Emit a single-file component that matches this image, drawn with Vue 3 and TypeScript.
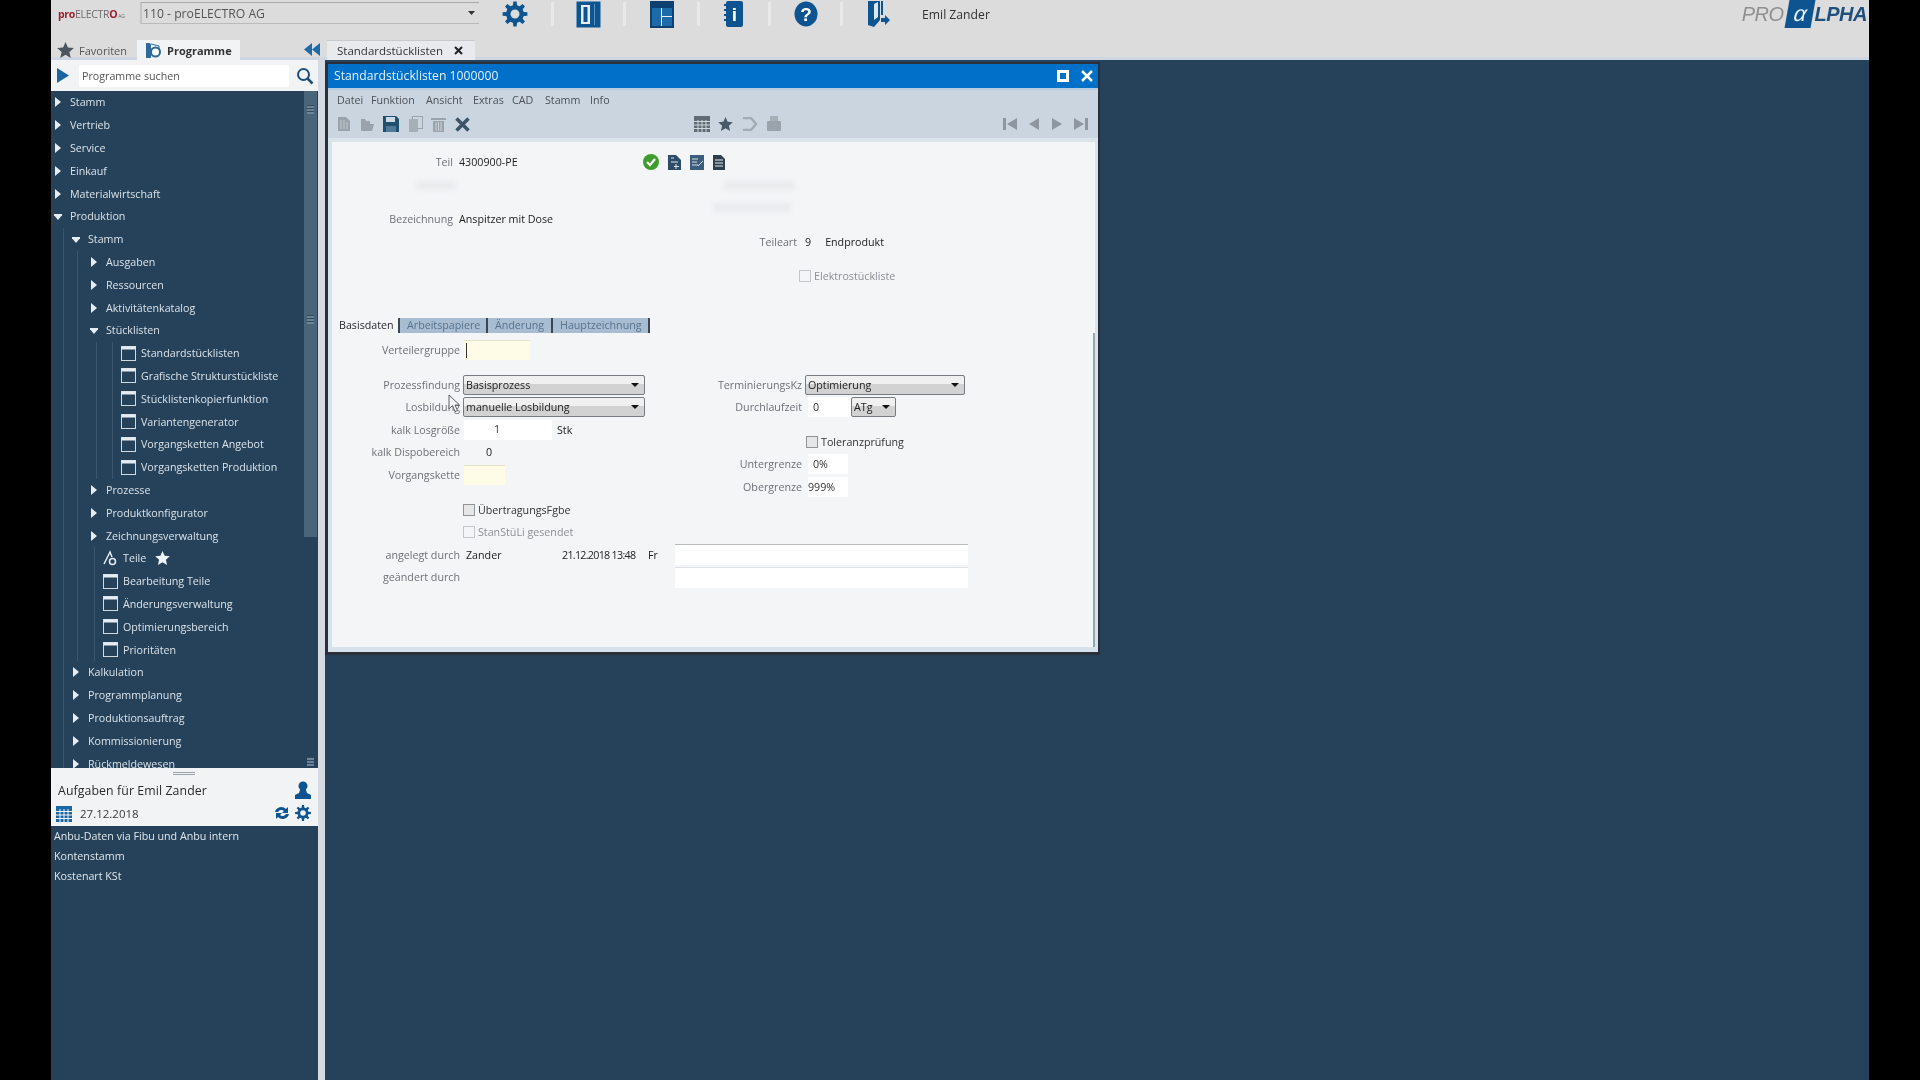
<template>
  <div class="screen">
    <div class="app">
      <!-- top bar -->
      <header class="topbar">
        <div class="top-row">
          <div class="brand"><b>pro</b><span>ELECTR</span><b>O</b><i>AG</i></div>
          <div class="company">
            <span>110 - proELECTRO AG</span>
            <svg width="7" height="4" viewBox="0 0 7 4"><path d="M0 0h7L3.500 4z" fill="#333" /></svg>
          </div>
          <div class="tool-slot" style="width: 75px">
            <svg width="26" height="26" viewBox="0 0 26 26"><path :d="gearPath(13, 13, 12.500, 9, 4.500)" fill="#0e5490" fill-rule="evenodd" /></svg>
          </div>
          <div class="tool-slot" style="width: 72px">
            <svg width="25" height="27" viewBox="0 0 25 27">
              <rect x="0.500" y="0.500" width="24" height="26" fill="#0e5490" />
              <rect x="5" y="4" width="9" height="19" fill="#e8eef4" />
              <rect x="7.500" y="6" width="4" height="15" fill="#0e5490" />
              <path d="M18.500 3v21" stroke="#5d93bf" />
            </svg>
          </div>
          <div class="tool-slot" style="width: 74px">
            <svg width="24" height="27" viewBox="0 0 24 27">
              <rect x="0" y="0" width="24" height="27" fill="#0d3f70" />
              <rect x="2" y="7" width="9" height="18" fill="#1c6ba8" />
              <rect x="12" y="7" width="10" height="8" fill="#1c6ba8" />
              <rect x="12" y="16" width="10" height="9" fill="#1c6ba8" />
              <path d="M11.500 7v18M12 15.500h10" stroke="#e8eef4" />
            </svg>
          </div>
          <div class="tool-slot" style="width: 71px">
            <svg width="20" height="28" viewBox="0 0 20 28">
              <rect x="2" y="1" width="17" height="26" rx="2" fill="#0e5490" />
              <path d="M0 5h4M0 10h4M0 15h4M0 20h4" stroke="#0e5490" stroke-width="2" />
              <text x="10.500" y="21" text-anchor="middle" class="icon-text" font-size="19">i</text>
            </svg>
          </div>
          <div class="tool-slot" style="width: 72px">
            <svg width="24" height="26" viewBox="0 0 24 26">
              <ellipse cx="12" cy="13" rx="11.500" ry="12.500" fill="#0e5490" />
              <text x="12" y="20" text-anchor="middle" class="icon-text" font-size="19">?</text>
            </svg>
          </div>
          <div class="tool-slot last" style="width: 70px">
            <svg width="24" height="28" viewBox="0 0 24 28">
              <path d="M2 1h12v19l-6 7-6-2z" fill="#0e5490" />
              <path d="M8 4l4-2v15l-4 3z" fill="#dce6ee" />
              <path d="M15 1h2v14h-2z" fill="#0e5490" />
              <path d="M15 18h4v-3l5 5-5 5v-3h-4z" fill="#0e5490" />
            </svg>
          </div>
          <span class="user-name">Emil Zander</span>
          <div class="proalpha">
            <span class="pa-pro">PRO</span>
            <span class="pa-box"><em>α</em></span>
            <span class="pa-lpha">LPHA</span>
          </div>
        </div>
        <div class="tab-row">
          <div class="side-tab">
            <svg width="17" height="16" viewBox="0 0 24 23"><path :d="starPath" fill="#4a5560" /></svg>
            <span>Favoriten</span>
          </div>
          <div class="side-tab active">
            <svg width="16" height="17" viewBox="0 0 16 17">
              <path d="M1 1h4l1 2v13H1z" fill="#2d6a9c" />
              <circle cx="10.500" cy="10" r="4.500" fill="#fff" stroke="#2d6a9c" stroke-width="2" />
              <path d="M6 2l8 2v3" fill="none" stroke="#2d6a9c" />
            </svg>
            <span>Programme</span>
          </div>
          <svg class="collapse" width="16" height="13" viewBox="0 0 16 13">
            <path d="M8 0v13L0 6.500zM16 0v13L8 6.500z" fill="#1f6aa8" />
          </svg>
          <div class="doc-tab">
            <span>Standardstücklisten</span>
            <svg width="9" height="9" viewBox="0 0 9 9"><path d="M1 1l7 7M8 1L1 8" stroke="#222" stroke-width="2" /></svg>
          </div>
        </div>
      </header>

      <div class="body">
        <!-- navigation -->
        <aside class="sidebar">
          <div class="search-row">
            <svg width="12" height="15" viewBox="0 0 12 15"><path d="M0 0l12 7.500L0 15z" fill="#1a66a3" /></svg>
            <div class="search-box">Programme suchen</div>
            <svg width="18" height="18" viewBox="0 0 18 18">
              <circle cx="7.500" cy="7.500" r="5.500" fill="none" stroke="#1d4f78" stroke-width="2" />
              <path d="M11.500 11.500l5 5" stroke="#1d4f78" stroke-width="2.500" />
            </svg>
          </div>

          <div class="tree">
            <div v-for="row in treeRows" :key="row.id" class="tree-row" :style="{ paddingLeft: row.indent + 'px' }">
              <i v-for="g in row.guides" :key="g" class="guide" :style="{ left: g + 'px' }"></i>
              <svg v-if="row.kind === 'closed'" class="twist" width="8" height="10" viewBox="0 0 8 10"><path d="M1 0l6 5-6 5z" fill="#e6edf2" /></svg>
              <svg v-else-if="row.kind === 'open'" class="twist" width="8" height="10" viewBox="0 0 8 10"><path d="M-1 3h10L4 9z" fill="#e6edf2" /></svg>
              <svg v-else-if="row.kind === 'tool'" class="leaf" width="15" height="16" viewBox="0 0 15 16">
                <path d="M1 14L7 2l2 5" fill="none" stroke="#e6edf2" stroke-width="1.500" />
                <circle cx="9.500" cy="11.500" r="3" fill="none" stroke="#e6edf2" stroke-width="1.500" />
              </svg>
              <svg v-else class="leaf" width="15" height="15" viewBox="0 0 15 15">
                <rect x="0.500" y="0.500" width="14" height="14" fill="none" stroke="#cfdae3" />
                <rect x="0.500" y="0.500" width="14" height="3" fill="#e6edf2" />
              </svg>
              <span>{{ row.label }}</span>
              <svg v-if="row.kind === 'tool'" class="fav" width="15" height="14" viewBox="0 0 24 23"><path :d="starPath" fill="#eef3f7" /></svg>
            </div>
            <div class="tree-scroll">
              <span class="grip"></span>
              <span class="grip mid"></span>
            </div>
            <span class="grip end"></span>
          </div>

          <section class="tasks">
            <span class="task-grip"></span>
            <div class="task-head">
              <span>Aufgaben für Emil Zander</span>
              <svg width="16" height="18" viewBox="0 0 16 18">
                <circle cx="8" cy="5" r="4.500" fill="#0e5490" />
                <path d="M5 9h6l1 3 4 2v4H0v-4l4-2z" fill="#0e5490" />
              </svg>
            </div>
            <div class="task-date">
              <svg width="16" height="18" viewBox="0 0 16 18">
                <rect y="2" width="16" height="16" fill="#1a66a3" />
                <path d="M0 7.500h16M0 11h16M0 14.500h16M4 5v13M8 5v13M12 5v13" stroke="#f2f3f5" />
              </svg>
              <span>27.12.2018</span>
              <svg class="refresh" width="16" height="16" viewBox="0 0 16 16">
                <path d="M1 7a6.500 6.500 0 0 1 11-3l2-2v6H8l2-2a4 4 0 0 0-6 1z" fill="#0e5490" />
                <path d="M15 9a6.500 6.500 0 0 1-11 3l-2 2V8h6l-2 2a4 4 0 0 0 6-1z" fill="#0e5490" />
              </svg>
              <svg width="16" height="16" viewBox="0 0 26 26"><path :d="gearPath(13, 13, 13, 9, 4.500)" fill="#0e5490" fill-rule="evenodd" /></svg>
            </div>
          </section>

          <ul class="task-list">
            <li>Anbu-Daten via Fibu und Anbu intern</li>
            <li>Kontenstamm</li>
            <li>Kostenart KSt</li>
          </ul>
        </aside>
        <div class="splitter"></div>

        <!-- desktop -->
        <main class="desktop">
          <div class="window">
            <div class="win-title">
              <span>Standardstücklisten 1000000</span>
              <svg width="12" height="12" viewBox="0 0 12 12"><rect x="1.500" y="1.500" width="9" height="9" fill="none" stroke="#fff" stroke-width="3" /></svg>
              <svg class="win-close" width="12" height="12" viewBox="0 0 12 12"><path d="M1 1l10 10M11 1L1 11" stroke="#fff" stroke-width="2.500" /></svg>
            </div>
            <div class="win-band">
              <nav class="win-menu">
                <span style="width: 34px">Datei</span>
                <span style="width: 55px">Funktion</span>
                <span style="width: 47px">Ansicht</span>
                <span style="width: 39px">Extras</span>
                <span style="width: 33px">CAD</span>
                <span style="width: 45px">Stamm</span>
                <span>Info</span>
              </nav>
              <div class="win-tools">
                <div class="tool-group">
                  <svg width="14" height="16" viewBox="0 0 14 16"><path d="M1 1h8l4 4v10H1z" fill="#9aa3ab" /><path d="M4 4v9M7 4v9M10 6v7" stroke="#c3cbd2" /></svg>
                  <svg width="15" height="16" viewBox="0 0 15 16"><path d="M1 3h4l1 2h4v3h4l-2 7H1z" fill="#9aa3ab" /></svg>
                  <svg width="16" height="16" viewBox="0 0 16 16"><path d="M0 0h13l3 3v13H0z" fill="#234f6e" /><rect x="3" y="1" width="9" height="5" fill="#cfdbe4" /><rect x="3" y="10" width="10" height="6" fill="#4d7a99" /></svg>
                  <svg width="15" height="16" viewBox="0 0 15 16"><rect x="4.500" y="0.500" width="10" height="12" fill="none" stroke="#9aa3ab" /><rect x="1" y="3" width="9" height="13" fill="#a7afb6" /></svg>
                  <svg width="15" height="16" viewBox="0 0 15 16"><path d="M0 2h15v2H0zM2 5h11v11H2z" fill="#9aa3ab" /><path d="M5 6v9M7.500 6v9M10 6v9" stroke="#cfd6dc" /></svg>
                  <svg width="15" height="15" viewBox="0 0 15 15"><path d="M1.500 1.500l12 12M13.500 1.500l-12 12" stroke="#3a5568" stroke-width="3.500" /></svg>
                </div>
                <div class="tool-group mid">
                  <svg width="16" height="16" viewBox="0 0 16 16"><rect width="16" height="16" fill="#5f6b75" /><path d="M0 5.500h16M0 9h16M0 12.500h16M4 4v12M8 4v12M12 4v12" stroke="#cfd6dc" /></svg>
                  <svg width="15" height="14" viewBox="0 0 24 23"><path :d="starPath" fill="#4a5a68" /></svg>
                  <svg width="16" height="14" viewBox="0 0 16 14"><path d="M1 1h8l5 6-5 6H1" fill="none" stroke="#a3abb2" stroke-width="2.500" /></svg>
                  <svg width="16" height="16" viewBox="0 0 16 16"><rect x="1" y="5" width="14" height="10" rx="1" fill="#9aa3ab" /><rect x="4" y="0" width="8" height="5" fill="#a7afb6" /></svg>
                </div>
                <div class="tool-group nav">
                  <svg width="14" height="14" viewBox="0 0 14 14"><path d="M0 1h3v12H0zM14 1v12L4 7z" fill="#8e979f" /></svg>
                  <svg width="12" height="14" viewBox="0 0 12 14"><path d="M11 1v12L1 7z" fill="#8e979f" /></svg>
                  <svg width="12" height="14" viewBox="0 0 12 14"><path d="M1 1v12l10-6z" fill="#8e979f" /></svg>
                  <svg width="14" height="14" viewBox="0 0 14 14"><path d="M14 1h-3v12h3zM0 1v12l10-6z" fill="#8e979f" /></svg>
                </div>
              </div>
            </div>

            <div class="win-content">
              <div class="form-head">
                <div class="row">
                  <label class="lbl head-lbl">Teil</label>
                  <span class="val">4300900-PE</span>
                  <div class="teil-icons">
                    <svg width="16" height="16" viewBox="0 0 16 16">
                      <circle cx="8" cy="8" r="8" fill="#3f9d2f" />
                      <path d="M4 8l3 3 5-6" fill="none" stroke="#fff" stroke-width="2.200" />
                    </svg>
                    <svg width="13" height="15" viewBox="0 0 13 15"><path d="M0 0h8l5 5v10H0z" fill="#2c4c68" /><path d="M3 3h3M3 7h7M8 9v5M6 11.500h5" stroke="#dfe6ec" /></svg>
                    <svg width="14" height="15" viewBox="0 0 14 15"><rect width="14" height="15" fill="#3c5d7c" /><path d="M2 4h6M2 7h5M2 10h6M8 11l5-5" stroke="#d6dfe6" /></svg>
                    <svg width="12" height="15" viewBox="0 0 12 15"><path d="M0 0h8l4 4v11H0z" fill="#2f3f4d" /><path d="M2 5h8M2 8h8M2 11h8" stroke="#e8ecef" /></svg>
                  </div>
                </div>
                <div class="head-cols">
                  <div class="head-left">
                    <div class="ghost" style="width: 40px; margin-left: 84px"></div>
                    <div class="row">
                      <label class="lbl head-lbl">Bezeichnung</label>
                      <span class="val">Anspitzer mit Dose</span>
                    </div>
                  </div>
                  <div class="head-right">
                    <div class="ghost" style="width: 71px; margin-left: 92px"></div>
                    <div class="ghost" style="width: 78px; margin-left: 81px"></div>
                    <div class="row teileart">
                      <label class="lbl">Teileart</label>
                      <span class="val">9</span>
                      <span class="val end">Endprodukt</span>
                    </div>
                    <div class="check-row off elektro"><i class="box"></i><span>Elektrostückliste</span></div>
                  </div>
                </div>
              </div>

              <div class="form-tabs">
                <span class="ftab first">Basisdaten</span>
                <span class="ftab" style="width: 88px">Arbeitspapiere</span>
                <span class="ftab" style="width: 65px">Änderung</span>
                <span class="ftab" style="width: 97px">Hauptzeichnung</span>
              </div>

              <div class="row main-lbl verteiler">
                <label class="lbl">Verteilergruppe</label>
                <div class="field yellow" style="width: 66px"><i class="caret"></i></div>
              </div>

              <div class="form-cols">
                <div class="col-left">
                  <div class="row">
                    <label class="lbl">Prozessfindung</label>
                    <div class="combo" style="width: 182px"><span>Basisprozess</span><i class="drop"></i></div>
                  </div>
                  <div class="row">
                    <label class="lbl">Losbildung</label>
                    <div class="combo" style="width: 182px"><span>manuelle Losbildung</span><i class="drop"></i></div>
                  </div>
                  <div class="row">
                    <label class="lbl">kalk Losgröße</label>
                    <div class="field white center-one" style="width: 88px">1</div>
                    <span class="val unit">Stk</span>
                  </div>
                  <div class="row">
                    <label class="lbl">kalk Dispobereich</label>
                    <span class="val dispo">0</span>
                  </div>
                  <div class="row">
                    <label class="lbl">Vorgangskette</label>
                    <div class="field yellow" style="width: 41px"></div>
                  </div>
                  <div class="check-row first-check"><i class="box"></i><span>ÜbertragungsFgbe</span></div>
                  <div class="check-row off"><i class="box"></i><span>StanStüLi gesendet</span></div>
                </div>

                <div class="col-right">
                  <div class="row">
                    <label class="lbl">TerminierungsKz</label>
                    <div class="combo" style="width: 160px"><span>Optimierung</span><i class="drop"></i></div>
                  </div>
                  <div class="row">
                    <label class="lbl">Durchlaufzeit</label>
                    <div class="field white num" style="width: 43px">0</div>
                    <div class="combo" style="width: 45px"><span>ATg</span><i class="drop"></i></div>
                  </div>
                  <div class="check-row toleranz"><i class="box"></i><span>Toleranzprüfung</span></div>
                  <div class="row">
                    <label class="lbl">Untergrenze</label>
                    <div class="field white num" style="width: 40px">0%</div>
                  </div>
                  <div class="row">
                    <label class="lbl">Obergrenze</label>
                    <div class="field white num tight" style="width: 40px">999%</div>
                  </div>
                </div>
              </div>

              <div class="row audit">
                <label class="lbl">angelegt durch</label>
                <span class="val who">Zander</span>
                <span class="val stamp">21.12.2018 13:48</span>
                <span class="val day">Fr</span>
                <div class="field white wide"></div>
              </div>
              <div class="row audit">
                <label class="lbl">geändert durch</label>
                <div class="field white wide empty"></div>
              </div>

              <div class="win-scroll"></div>
            </div>
            <svg class="pointer" width="12" height="19" viewBox="0 0 12 19">
              <path d="M1 1v14l3.500-3.500L7 17.500l2.500-1L7 11h4.500z" fill="#f4f5f7" stroke="#5c6066" />
            </svg>
          </div>
        </main>
      </div>
    </div>
  </div>
</template>

<script setup lang="ts">
type RowKind = 'closed' | 'open' | 'leaf' | 'tool';

interface TreeRow {
  id: number;
  label: string;
  kind: RowKind;
  indent: number;
  guides: number[];
}

// [label, kind, indent]
const rawRows: [string, RowKind, number][] = [
  ['Stamm', 'closed', 3],
  ['Vertrieb', 'closed', 3],
  ['Service', 'closed', 3],
  ['Einkauf', 'closed', 3],
  ['Materialwirtschaft', 'closed', 3],
  ['Produktion', 'open', 3],
  ['Stamm', 'open', 21],
  ['Ausgaben', 'closed', 39],
  ['Ressourcen', 'closed', 39],
  ['Aktivitätenkatalog', 'closed', 39],
  ['Stücklisten', 'open', 39],
  ['Standardstücklisten', 'leaf', 70],
  ['Grafische Strukturstückliste', 'leaf', 70],
  ['Stücklistenkopierfunktion', 'leaf', 70],
  ['Variantengenerator', 'leaf', 70],
  ['Vorgangsketten Angebot', 'leaf', 70],
  ['Vorgangsketten Produktion', 'leaf', 70],
  ['Prozesse', 'closed', 39],
  ['Produktkonfigurator', 'closed', 39],
  ['Zeichnungsverwaltung', 'closed', 39],
  ['Teile', 'tool', 52],
  ['Bearbeitung Teile', 'leaf', 52],
  ['Änderungsverwaltung', 'leaf', 52],
  ['Optimierungsbereich', 'leaf', 52],
  ['Prioritäten', 'leaf', 52],
  ['Kalkulation', 'closed', 21],
  ['Programmplanung', 'closed', 21],
  ['Produktionsauftrag', 'closed', 21],
  ['Kommissionierung', 'closed', 21],
  ['Rückmeldewesen', 'closed', 21],
];

const guidesFor = (i: number): number[] => {
  const out: number[] = [];
  if (i >= 6) out.push(12);
  if (i >= 7 && i <= 24) out.push(26);
  if (i >= 11 && i <= 16) out.push(45, 61);
  if (i >= 20 && i <= 24) out.push(43);
  return out;
};

const treeRows: TreeRow[] = rawRows.map(([label, kind, indent], id) => ({
  id,
  label,
  kind,
  indent,
  guides: guidesFor(id),
}));

const starPath = 'M12 0l3.500 8 8.500.8-6.400 5.700 1.900 8.500L12 18.500 4.500 23l1.900-8.500L0 8.800 8.500 8z';

// gear with 8 teeth and a round hole
const gearPath = (cx: number, cy: number, outer: number, inner: number, hole: number): string => {
  const teeth = 8;
  const pts: string[] = [];
  for (let i = 0; i < teeth; i++) {
    const a = (i / teeth) * Math.PI * 2;
    const w = (Math.PI * 2) / teeth;
    const corners: [number, number][] = [
      [inner, a - w * 0.3],
      [outer, a - w * 0.17],
      [outer, a + w * 0.17],
      [inner, a + w * 0.3],
    ];
    for (const [r, t] of corners) {
      pts.push(`${(cx + r * Math.cos(t)).toFixed(2)} ${(cy + r * Math.sin(t)).toFixed(2)}`);
    }
  }
  const ring = `M${cx - hole} ${cy}a${hole} ${hole} 0 1 0 ${hole * 2} 0a${hole} ${hole} 0 1 0 ${-hole * 2} 0z`;
  return `M${pts.join('L')}z${ring}`;
};
</script>

<style scoped>
.screen {
  width: 1920px;
  height: 1080px;
  background: #000;
  overflow: hidden;
  font-family: "Open Sans", "Liberation Sans", sans-serif;
  font-size: 10.700px;
  color: #222;
  filter: blur(0.4px);
}

.app {
  width: 1818px;
  height: 1080px;
  margin-left: 51px;
  display: flex;
  flex-direction: column;
  box-shadow: inset -5px 0 0 #33415a;
}

svg {
  display: block;
  flex-shrink: 0;
}

.icon-text {
  fill: #fff;
  font-family: "Liberation Sans", sans-serif;
  font-weight: 700;
}

/* top bar */
.topbar {
  height: 60px;
  flex-shrink: 0;
  background: #dcdcdc;
}

.top-row {
  height: 28px;
  display: flex;
  align-items: center;
  padding-left: 7px;
}

.brand {
  width: 69px;
  margin-right: 13px;
  font-size: 10.500px;
  letter-spacing: -0.3px;
  color: #6c6c6c;
  white-space: nowrap;
}

.brand b {
  color: #9a1f2c;
}

.brand i {
  margin-left: 1px;
  font-size: 5px;
  font-style: normal;
}

.company {
  width: 339px;
  height: 22px;
  margin-top: -2px;
  box-sizing: border-box;
  border-top: 1px solid #aaa;
  border-bottom: 1px solid #bbb;
  border-left: 2px solid #c4c4c4;
  display: flex;
  align-items: center;
  justify-content: space-between;
  padding: 0 4px 0 1px;
  font-size: 12.200px;
  color: #555;
}

.tool-slot {
  height: 24px;
  box-sizing: border-box;
  border-right: 3px solid #e9e9e9;
  display: flex;
  align-items: center;
  justify-content: center;
}

.tool-slot.last {
  border-right: 0;
}

.user-name {
  margin-left: 9px;
  font-size: 12.200px;
  color: #333;
}

.proalpha {
  margin-left: auto;
  margin-right: 2px;
  display: flex;
  align-items: center;
  height: 28px;
  font-family: "Liberation Sans", sans-serif;
  font-style: italic;
  font-size: 20px;
  letter-spacing: -0.5px;
}

.pa-pro {
  color: #8f8f8f;
  margin-right: 3px;
}

.pa-box {
  width: 26px;
  height: 28px;
  background: #0e5490;
  transform: skewX(-10deg);
  display: flex;
  align-items: center;
  justify-content: center;
}

.pa-box em {
  color: #e4f0fa;
  font-size: 22px;
  font-style: italic;
}

.pa-lpha {
  color: #1f4f7c;
  font-weight: 700;
  margin-left: 2px;
}

.tab-row {
  height: 20px;
  margin-top: 12px;
  display: flex;
  box-shadow: inset 0 -3px 0 #cdd6e2;
}

.side-tab {
  width: 86px;
  display: flex;
  align-items: center;
  gap: 5px;
  padding-left: 6px;
  box-sizing: border-box;
  font-size: 11px;
  color: #555;
}

.side-tab.active {
  width: 103px;
  gap: 6px;
  padding-left: 8px;
  background: #f2f3f5;
  font-weight: 700;
  color: #333;
}

.collapse {
  margin: 3px 0 0 64px;
}

.doc-tab {
  width: 148px;
  margin-left: 7px;
  box-sizing: border-box;
  display: flex;
  align-items: center;
  padding-left: 10px;
  gap: 11px;
  background: #e9eaee;
  border-top: 1px solid #c9c9c9;
  font-size: 11.500px;
  color: #333;
}

/* body */
.body {
  flex: 1;
  display: flex;
  min-height: 0;
}

.sidebar {
  width: 267px;
  flex-shrink: 0;
  display: flex;
  flex-direction: column;
  background: #26425a;
  box-shadow: inset 3px 0 0 #2f3f53;
}

.search-row {
  height: 31px;
  flex-shrink: 0;
  box-sizing: border-box;
  display: flex;
  align-items: center;
  padding-left: 6px;
  background: #f2f3f5;
}

.search-box {
  width: 210px;
  height: 22px;
  margin: 0 7px 0 10px;
  box-sizing: border-box;
  padding-left: 3px;
  line-height: 22px;
  background: #fff;
  color: #555;
}

.tree {
  position: relative;
  height: 677px;
  flex-shrink: 0;
  overflow: hidden;
  box-sizing: border-box;
}

.tree-row {
  position: relative;
  height: 22.800px;
  display: flex;
  align-items: center;
  color: #d9e2e9;
  white-space: nowrap;
}

.twist {
  margin-right: 8px;
}

.leaf {
  margin-right: 5px;
}

.fav {
  margin-left: 9px;
}

.guide {
  position: absolute;
  top: 0;
  bottom: 0;
  width: 1px;
  background: #3b566c;
}

.tree-scroll {
  position: absolute;
  top: 0;
  bottom: 231px;
  left: 253px;
  width: 13px;
  background: #4a6479;
}

.grip {
  position: absolute;
  left: 3px;
  top: 14px;
  width: 7px;
  height: 9px;
  background: repeating-linear-gradient(#30495f 0 1px, #6d8498 1px 3px);
}

.grip.mid {
  top: 224px;
}

.grip.end {
  left: 256px;
  top: auto;
  bottom: 2px;
}

.tasks {
  position: relative;
  height: 58px;
  flex-shrink: 0;
  box-sizing: border-box;
  padding: 12px 7px 0;
  background: #f2f3f5;
}

.task-grip {
  position: absolute;
  top: 4px;
  left: 122px;
  width: 22px;
  height: 3px;
  background: repeating-linear-gradient(#9aa3ab 0 1px, transparent 1px 2px);
}

.task-head {
  display: flex;
  align-items: center;
  justify-content: space-between;
  height: 20px;
  font-size: 12.300px;
  letter-spacing: 0.1px;
  color: #2b2b2b;
}

.task-date {
  display: flex;
  align-items: center;
  height: 22px;
  margin: 2px 0 0 -2px;
  gap: 8px;
  font-size: 11.500px;
  color: #3b3b3b;
}

.task-date .refresh {
  margin-left: auto;
  margin-right: -3px;
}

.task-list {
  list-style: none;
  margin: 0;
  padding: 1px 0 0 3px;
  color: #dfe6eb;
}

.task-list li {
  height: 19.800px;
  line-height: 19.800px;
}

.splitter {
  width: 7px;
  flex-shrink: 0;
  background: #d5dae3;
}

.desktop {
  flex: 1;
  background: #26425a;
  padding-top: 2px;
}

/* window */
.window {
  position: relative;
  width: 775px;
  height: 593px;
  box-sizing: border-box;
  border: solid #2a303b;
  border-width: 2px 2px 3px 3px;
  display: flex;
  flex-direction: column;
  background: #d6e2ec;
}

.win-title {
  height: 24px;
  flex-shrink: 0;
  background: #0070c8;
  display: flex;
  align-items: center;
  padding: 0 5px 1px 6px;
  box-sizing: border-box;
  font-size: 12.200px;
  color: #e2f1fd;
}

.win-title span {
  flex: 1;
}

.win-close {
  margin-left: 12px;
}

.win-band {
  height: 54px;
  flex-shrink: 0;
  background: #cad5df;
  box-sizing: border-box;
  border-top: 2px solid #b4cde2;
  border-bottom: 4px solid #dce4eb;
}

.win-menu {
  height: 20px;
  display: flex;
  align-items: center;
  padding-left: 9px;
  color: #4b5157;
}

.win-tools {
  height: 28px;
  display: flex;
  align-items: center;
  padding-left: 9px;
}

.tool-group {
  display: flex;
  align-items: center;
  gap: 8.500px;
}

.tool-group.mid {
  margin-left: 224.500px;
  gap: 8.300px;
}

.tool-group.nav {
  margin-left: 221px;
  gap: 11px;
}

.win-content {
  position: relative;
  flex: 1;
  margin: 0 3px 5px 4px;
  background: #f4f5f7;
  min-height: 0;
}

.win-scroll {
  position: absolute;
  top: 191px;
  bottom: 0;
  right: 0;
  width: 2px;
  background: #97a6b3;
}

.row {
  height: 22.500px;
  display: flex;
  align-items: center;
}

.lbl {
  width: 128px;
  flex-shrink: 0;
  text-align: right;
  color: #6d7277;
  white-space: nowrap;
}

.val {
  color: #222;
  white-space: nowrap;
}

.form-head {
  height: 176px;
  padding-top: 9px;
  box-sizing: border-box;
}

.head-lbl {
  width: 121px;
  margin-right: 6px;
}

.teil-icons {
  display: flex;
  align-items: center;
  gap: 9px;
  margin-left: 125px;
}

.head-cols {
  display: flex;
}

.head-left {
  width: 300px;
}

.head-left .ghost + .row {
  margin-top: 18px;
}

.ghost {
  height: 9px;
  margin-top: 7px;
  background: #e9ebed;
  filter: blur(2px);
}

.head-right {
  flex: 1;
}

.head-right .ghost + .ghost {
  margin-top: 13px;
}

.teileart {
  margin-top: 19px;
}

.teileart .lbl {
  width: 45px;
  margin: 0 8px 0 120px;
}

.teileart .end {
  margin-left: 14px;
}

.elektro {
  margin: 12px 0 0 167px;
}

.form-tabs {
  height: 15px;
  display: flex;
  align-items: center;
  padding-left: 6px;
}

.ftab {
  height: 15px;
  box-sizing: border-box;
  padding-left: 7px;
  line-height: 15px;
  border-right: 2px solid #3d4650;
  background: #a9bdd2;
  color: #58728e;
  white-space: nowrap;
}

.ftab.first {
  width: 62px;
  padding-left: 1px;
  background: none;
  color: #1f2428;
}

.main-lbl {
  margin-top: 6px;
}

.lbl + .field {
  margin-left: 4px;
}

.lbl + .combo {
  margin-left: 3px;
}

.field {
  height: 20px;
  box-sizing: border-box;
  flex-shrink: 0;
  color: #333;
}

.field.yellow {
  background: #fefbe6;
  border-top: 1px solid #e6e2c8;
}

.field.white {
  background: #fff;
}

.caret {
  display: block;
  width: 1px;
  height: 15px;
  margin: 2px 0 0 2px;
  background: #333;
}

.center-one {
  padding-left: 30px;
  line-height: 18px;
}

.num {
  padding-left: 5px;
  line-height: 20px;
}

.num.tight {
  padding-left: 0;
}

.unit {
  margin-left: 5px;
}

.dispo {
  margin-left: 26px;
}

.combo {
  height: 20px;
  box-sizing: border-box;
  flex-shrink: 0;
  display: flex;
  align-items: center;
  justify-content: space-between;
  padding: 0 5px 0 2px;
  border: 1px solid #777c82;
  border-radius: 2px;
  background: linear-gradient(#f0f0f0 0 45%, #d2d2d2 45% 100%);
  color: #222;
}

.drop {
  width: 0;
  height: 0;
  border: 4px solid transparent;
  border-top: 4px solid #111;
  border-bottom: 0;
}

.form-cols {
  display: flex;
  margin-top: 12px;
}

.col-left {
  width: 328px;
  flex-shrink: 0;
}

.col-right {
  flex: 1;
}

.col-right .lbl {
  width: 142px;
}

.col-right .lbl + .combo {
  margin-left: 3px;
}

.col-right .lbl + .field {
  margin-left: 6px;
}

.check-row {
  height: 22.500px;
  display: flex;
  align-items: center;
  gap: 3px;
  white-space: nowrap;
  color: #333;
}

.box {
  width: 12px;
  height: 12px;
  box-sizing: border-box;
  flex-shrink: 0;
  border: 1px solid #8f9499;
  background: #e6e6e6;
}

.check-row.off {
  color: #8b9096;
}

.check-row.off .box {
  border-color: #c4c8cc;
  background: #f4f5f7;
}

.col-left .check-row {
  margin-left: 131px;
}

.first-check {
  margin-top: 12.500px;
}

.toleranz {
  margin: 12px 0 0 146px;
}

.audit .who {
  margin-left: 6px;
  width: 96px;
}

.audit .stamp {
  width: 86px;
  letter-spacing: -0.7px;
}

.audit .day {
  width: 27px;
}

.field.wide {
  width: 293px;
  height: 21px;
  border-top: 1px solid #b9bcc0;
}

.field.empty {
  margin-left: 215px;
  border-top-color: #dfe1e4;
}

.pointer {
  position: absolute;
  left: 120px;
  top: 330px;
}
</style>

<style>
html,
body {
  margin: 0;
  background: #000;
}
</style>
